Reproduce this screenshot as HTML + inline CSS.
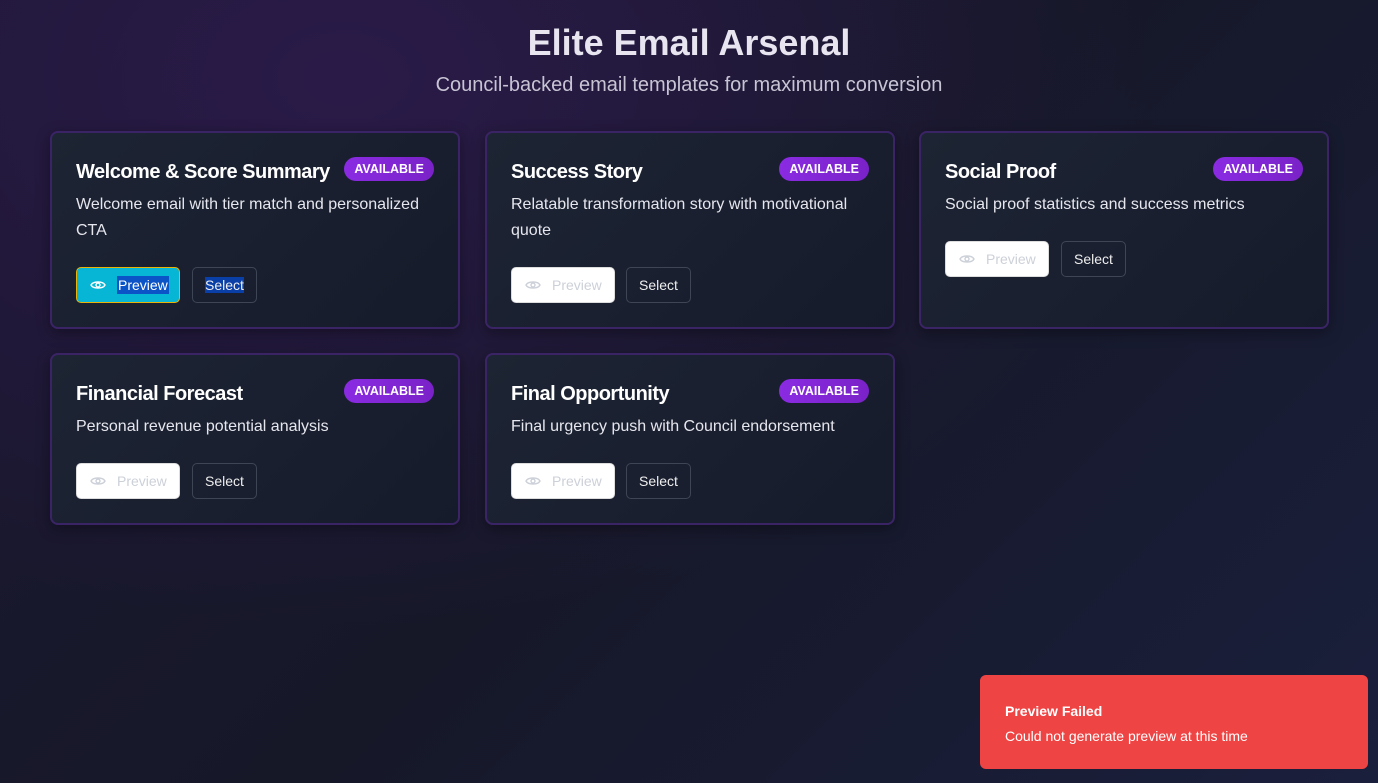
<!DOCTYPE html>
<html><head><meta charset="utf-8"><style>
*{box-sizing:border-box;margin:0;padding:0}
body{width:1378px;height:783px;overflow:hidden;font-family:"Liberation Sans",sans-serif;color:#fff;
background:radial-gradient(ellipse at 25% 10%,#2a1a48 0%,transparent 55%),linear-gradient(135deg,#1c1732 0%,#161828 50%,#1a1f3c 100%);position:relative}
h1{position:absolute;top:22px;left:0;width:1378px;text-align:center;font-size:36px;font-weight:bold;color:#e8e4f0}
.sub{position:absolute;top:74px;left:0;width:1378px;text-align:center;font-size:20px;color:#c8c4d4}
.card{position:absolute;width:410px;border:2px solid #3a2466;border-radius:8px;background:linear-gradient(135deg,#1d2433,#161b2b);box-shadow:0 4px 14px rgba(0,0,0,.35)}
.t{position:absolute;left:24px;top:28px;font-size:20px;font-weight:bold;letter-spacing:-.5px}
.b{position:absolute;right:24px;top:24px;height:24px;padding:0 10px;border-radius:12px;background:linear-gradient(90deg,#8a2be2,#7a22c8);font-size:12.5px;font-weight:bold;line-height:24px}
.d{position:absolute;left:24px;top:59px;width:360px;font-size:16px;line-height:26px;color:#e6e6ee}
.btn{position:absolute;height:36px;border-radius:5px;font-size:14px;line-height:34px}
.pv{width:104px;background:#fff;color:#ccd0d8;border:1px solid #ddd;padding-left:40px}
.pv svg{position:absolute;left:13px;top:11px}
.se{width:65px;border:1px solid #3e4656;text-align:center;color:#eee}
.toast{position:absolute;left:980px;top:675px;width:388px;height:94px;background:#ef4444;border-radius:6px;padding:28px 25px;font-size:14px}
</style></head><body>
<h1>Elite Email Arsenal</h1>
<div class="sub">Council-backed email templates for maximum conversion</div>

<div class="card" style="left:50px;top:131px;height:198px"><div class="t">Welcome &amp; Score Summary</div><div class="b">AVAILABLE</div><div class="d">Welcome email with tier match and personalized CTA</div>
<div class="btn pv" style="left:24px;top:134px;background:#06b6d4;border:1px solid #eab308;color:#fff"><svg width="16" height="12" viewBox="0 0 16 12"><path d="M1 6C3 2 13 2 15 6C13 10 3 10 1 6Z" fill="none" stroke="#fff" stroke-width="1.4"/><circle cx="8" cy="6" r="2" fill="none" stroke="#fff" stroke-width="1.4"/></svg><span style="background:#0b54c8;padding:1px">Preview</span></div>
<div class="btn se" style="left:140px;top:134px"><span style="background:#0b3fa8">Select</span></div></div>

<div class="card" style="left:485px;top:131px;height:198px"><div class="t">Success Story</div><div class="b">AVAILABLE</div><div class="d">Relatable transformation story with motivational quote</div>
<div class="btn pv" style="left:24px;top:134px"><svg width="16" height="12" viewBox="0 0 16 12"><path d="M1 6C3 2 13 2 15 6C13 10 3 10 1 6Z" fill="none" stroke="#ccd0d8" stroke-width="1.4"/><circle cx="8" cy="6" r="2" fill="none" stroke="#ccd0d8" stroke-width="1.4"/></svg>Preview</div>
<div class="btn se" style="left:139px;top:134px">Select</div></div>

<div class="card" style="left:919px;top:131px;height:198px"><div class="t">Social Proof</div><div class="b">AVAILABLE</div><div class="d">Social proof statistics and success metrics</div>
<div class="btn pv" style="left:24px;top:108px"><svg width="16" height="12" viewBox="0 0 16 12"><path d="M1 6C3 2 13 2 15 6C13 10 3 10 1 6Z" fill="none" stroke="#ccd0d8" stroke-width="1.4"/><circle cx="8" cy="6" r="2" fill="none" stroke="#ccd0d8" stroke-width="1.4"/></svg>Preview</div>
<div class="btn se" style="left:140px;top:108px">Select</div></div>

<div class="card" style="left:50px;top:353px;height:172px"><div class="t">Financial Forecast</div><div class="b">AVAILABLE</div><div class="d">Personal revenue potential analysis</div>
<div class="btn pv" style="left:24px;top:108px"><svg width="16" height="12" viewBox="0 0 16 12"><path d="M1 6C3 2 13 2 15 6C13 10 3 10 1 6Z" fill="none" stroke="#ccd0d8" stroke-width="1.4"/><circle cx="8" cy="6" r="2" fill="none" stroke="#ccd0d8" stroke-width="1.4"/></svg>Preview</div>
<div class="btn se" style="left:140px;top:108px">Select</div></div>

<div class="card" style="left:485px;top:353px;height:172px"><div class="t">Final Opportunity</div><div class="b">AVAILABLE</div><div class="d">Final urgency push with Council endorsement</div>
<div class="btn pv" style="left:24px;top:108px"><svg width="16" height="12" viewBox="0 0 16 12"><path d="M1 6C3 2 13 2 15 6C13 10 3 10 1 6Z" fill="none" stroke="#ccd0d8" stroke-width="1.4"/><circle cx="8" cy="6" r="2" fill="none" stroke="#ccd0d8" stroke-width="1.4"/></svg>Preview</div>
<div class="btn se" style="left:139px;top:108px">Select</div></div>

<div class="toast"><div style="font-weight:bold;margin-bottom:9px">Preview Failed</div><div>Could not generate preview at this time</div></div>
</body></html>
